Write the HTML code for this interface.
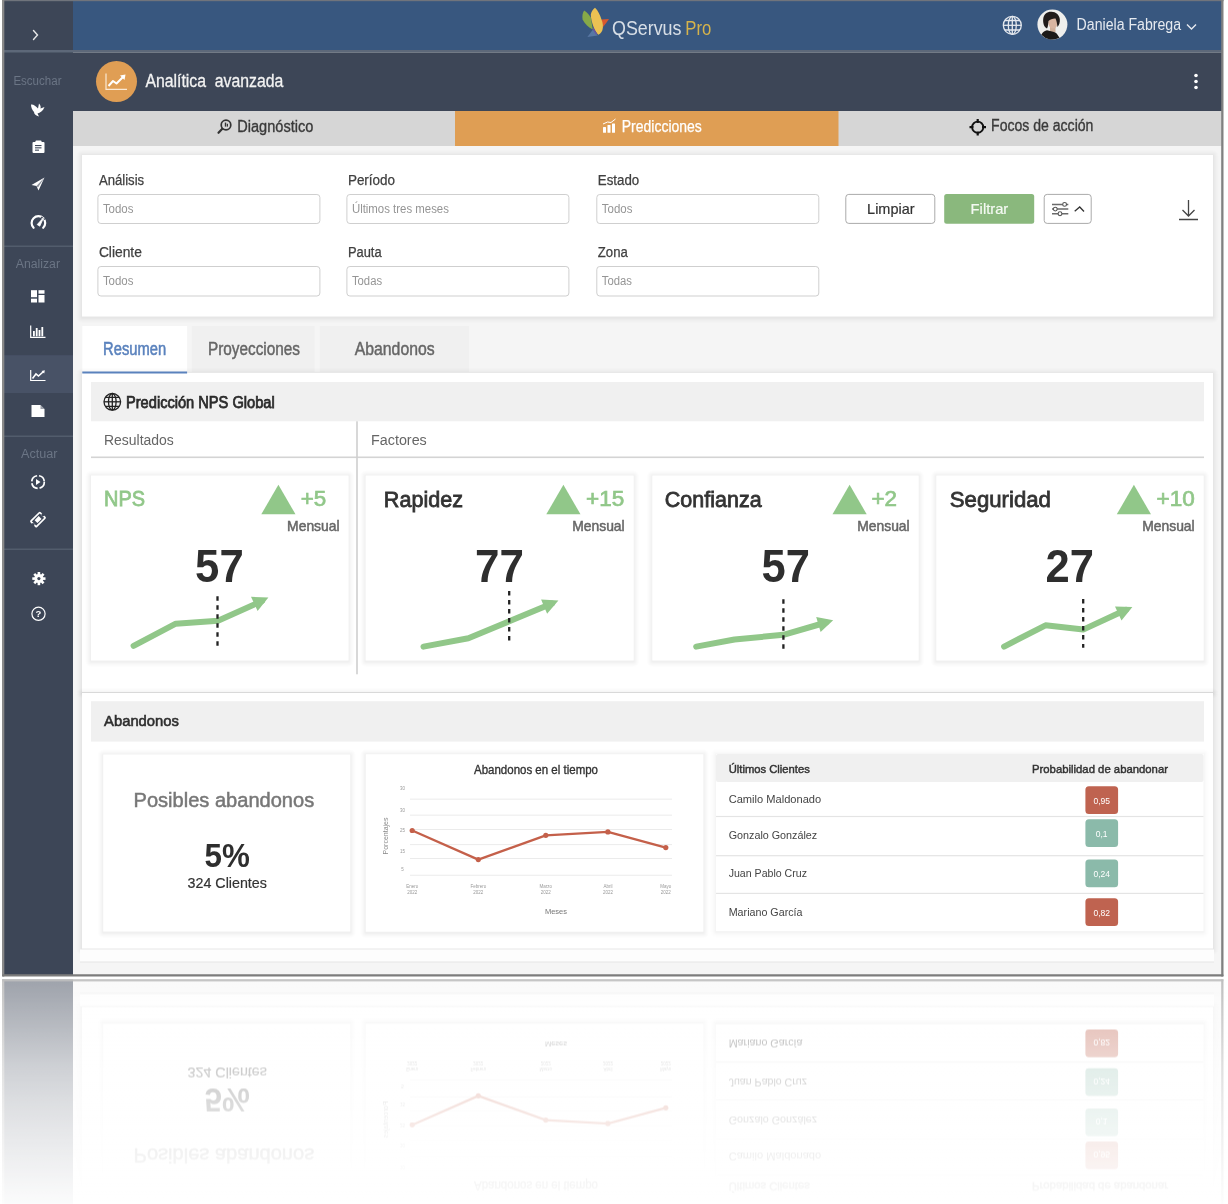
<!DOCTYPE html>
<html><head><meta charset="utf-8"><style>
html,body{margin:0;padding:0;background:#fff;}
body{width:1228px;height:1204px;position:relative;overflow:hidden;}
svg{position:absolute;left:0;top:0;will-change:transform;}
svg text{font-family:"Liberation Sans", sans-serif;}
#fade{position:absolute;left:0;top:978px;width:1228px;height:226px;background:linear-gradient(to bottom, rgba(255,255,255,0.5) 0px, rgba(255,255,255,0.53) 12px, rgba(255,255,255,0.645) 52px, rgba(255,255,255,0.745) 87px, rgba(255,255,255,0.82) 122px, rgba(255,255,255,0.88) 157px, rgba(255,255,255,0.96) 212px, rgba(255,255,255,0.98) 226px);}
</style></head><body>
<svg width="1228" height="1204" viewBox="0 0 1228 1204">
<g>
<rect x="2" y="0" width="1221" height="976" fill="#f5f5f5"/>
<rect x="2" y="0" width="71" height="976" fill="#3d4657"/>
<rect x="73" y="0" width="1150" height="51" fill="#38577f"/>
<rect x="2" y="50" width="1221" height="2.5" fill="#5d6879"/>
<rect x="73" y="52.5" width="1150" height="58.5" fill="#3d4657"/>
<path d="M33.5 30.5 L37.5 35 L33.5 39.5" fill="none" stroke="#e8e8e8" stroke-width="1.4" stroke-linecap="round"/>
<path d="M587.4 37 L592.9 29.5 L597.8 35.5 Z" fill="#5877a3"/>
<path d="M584.2 10.5 C587 12.5 589.5 15 590.8 17.5 L592.8 29.6 C588.5 27.5 585 24 582.6 19.5 C582 16 582.6 12.5 584.2 10.5 Z" fill="#86a948"/>
<path d="M601.2 19.5 L609 19 C607 22 605 24.5 603 27 Z" fill="#d7582e"/>
<path d="M595 7.8 C598 10.5 600 15 601.5 19.5 C603 23 603.5 27 602.3 30.5 C601 33 599.5 34.5 598.2 34.8 C596 32 594.5 29.5 593.6 27 C592 22.5 590.8 18 590.8 14.5 C591.5 11.5 593 9 595 7.8 Z" fill="#ebc153"/>
<path d="M593.6 27.2 C594.5 29.5 595.8 31.8 597.2 34 L596 34.8 L592.8 29.6 Z" fill="#6a55a0"/>
<text x="612" y="35.2" font-size="20" fill="#e9edf2" textLength="69.5" lengthAdjust="spacingAndGlyphs" fill-opacity="0.9">QServus</text>
<text x="685.3" y="35.2" font-size="20" fill="#d6b34b" textLength="26" lengthAdjust="spacingAndGlyphs">Pro</text>
<g fill="none" stroke="#e4e8ee" stroke-width="1.3"><circle cx="1012.3" cy="25.3" r="9"/><ellipse cx="1012.3" cy="25.3" rx="4" ry="9"/><line x1="1012.3" y1="16.3" x2="1012.3" y2="34.3"/><line x1="1003.3" y1="25.3" x2="1021.3" y2="25.3"/><path d="M1004.5 20.5 H1020 M1004.5 30 H1020"/></g>
<circle cx="1052.4" cy="24.6" r="15" fill="#efefed"/>
<rect x="1050" y="26" width="5.5" height="6" fill="#cfae98"/>
<ellipse cx="1053" cy="22.3" rx="4.8" ry="6.3" fill="#d9b5a1"/>
<path d="M1047 28.5 C1044 27 1042.8 23 1043.2 19 C1043.8 14 1047.5 11.5 1051.5 11.8 C1056 12 1059 14.5 1059.8 19 C1060.2 22.5 1059 25.5 1057.5 27 C1057 24 1056.8 21 1055.5 18.5 C1053 18.3 1050 19.5 1048.5 21 C1048 24 1048.2 26.5 1047 28.5 Z" fill="#211c1b"/>
<path d="M1041.3 34.7 C1043 32 1045 30.5 1047 30.3 L1051 31.3 C1054 31.8 1056 32.5 1057 34 L1059.5 37.8 A15 15 0 0 1 1041.3 34.7 Z" fill="#1b1918"/>
<text x="1076.6" y="30.4" font-size="16" fill="#e6eaf0" textLength="104.4" lengthAdjust="spacingAndGlyphs">Daniela Fabrega</text>
<path d="M1187 24.5 L1191.5 29 L1196 24.5" fill="none" stroke="#e6eaf0" stroke-width="1.4"/>
<circle cx="116.5" cy="81.5" r="20.5" fill="#e09e54"/>
<path d="M106 73.5 V89.3 H127" fill="none" stroke="#fbe9d4" stroke-width="1.2"/>
<path d="M108.5 86 L113 81 L116.5 83.5 L123.5 76.5" fill="none" stroke="#fff" stroke-width="2" stroke-linejoin="round"/>
<path d="M120 75.5 L125.5 74.5 L124.5 80 Z" fill="#fff"/>
<text x="145.4" y="87.3" font-size="18" fill="#f2f2f2" textLength="138" lengthAdjust="spacingAndGlyphs" stroke="#f2f2f2" stroke-width="0.3">Analítica  avanzada</text>
<circle cx="1196" cy="75.5" r="1.8" fill="#fff"/>
<circle cx="1196" cy="81.5" r="1.8" fill="#fff"/>
<circle cx="1196" cy="87.5" r="1.8" fill="#fff"/>
<rect x="73" y="111" width="1150" height="35" fill="#d6d6d6"/>
<rect x="455" y="111" width="383.5" height="35" fill="#df9e54"/>
<g fill="none" stroke="#333" stroke-width="1.7"><circle cx="226" cy="125" r="4.8"/><line x1="222.3" y1="128.8" x2="218.5" y2="132.8" stroke-width="2.2" stroke-linecap="round"/></g>
<rect x="224.8" y="122.6" width="1.4" height="4" fill="#333"/>
<rect x="226.8" y="123.8" width="1.2" height="2.8" fill="#333"/>
<text x="237.3" y="131.7" font-size="16" fill="#3a3a3a" textLength="76" lengthAdjust="spacingAndGlyphs" stroke="#3a3a3a" stroke-width="0.35">Diagnóstico</text>
<rect x="603" y="127" width="3" height="5.8" fill="#fff" rx="0.5"/>
<rect x="607.5" y="125" width="3" height="7.8" fill="#fff" rx="0.5"/>
<rect x="612" y="123.5" width="3" height="9.3" fill="#fff" rx="0.5"/>
<path d="M603 124 L607.5 122 L611 122.5 L615.5 119" fill="none" stroke="#fff" stroke-width="1"/>
<text x="621.8" y="131.7" font-size="16" fill="#fff" textLength="80" lengthAdjust="spacingAndGlyphs" stroke="#fff" stroke-width="0.25">Predicciones</text>
<g fill="none" stroke="#111" stroke-width="1.8"><circle cx="977.7" cy="127.2" r="5.6"/></g>
<path d="M977.7 119 V123 M977.7 131.5 V135.5 M969.5 127.2 H973.5 M982 127.2 H986" fill="none" stroke="#111" stroke-width="2.2"/>
<text x="991.1" y="131.4" font-size="16" fill="#3a3a3a" textLength="102.3" lengthAdjust="spacingAndGlyphs" stroke="#3a3a3a" stroke-width="0.35">Focos de acción</text>
<text x="13.4" y="85.2" font-size="12" fill="#6b7585" textLength="48.1" lengthAdjust="spacingAndGlyphs">Escuchar</text>
<path d="M31 104.5 C33 104 36 106 38 108.5 L39 103.5 C40.5 105 41 107 40.5 108.5 L44.5 107 C43 111 40 113 37.5 113.5 L39 116.5 C36 116 34 114 34 112 C32 110 31 107 31 104.5 Z" fill="#fff"/>
<rect x="32.5" y="142" width="12" height="11" fill="#fff" rx="1"/>
<rect x="35.5" y="140.5" width="6" height="2.8" fill="#fff" rx="0.8"/>
<rect x="35" y="145" width="6.5" height="1.1" fill="#3d4657"/>
<rect x="35" y="147.3" width="6.5" height="1.1" fill="#3d4657"/>
<rect x="35" y="149.6" width="4" height="1.1" fill="#3d4657"/>
<path d="M44.5 177.5 L31.5 185 L36.5 186 L38.5 190.5 Z" fill="#fff"/>
<path d="M36.5 186 L44.5 177.5 L38 187.5 Z" fill="#3d4657" fill-opacity="0.6"/>
<path d="M33.6 227.8 A6.8 6.8 0 1 1 43.2 227.8" fill="none" stroke="#fff" stroke-width="2.2" stroke-linecap="round"/>
<path d="M41 217 L45 219.6" fill="none" stroke="#3d4657" stroke-width="1.2"/>
<path d="M37.2 224.6 L43.6 217.6 L39.8 226.2 Z" fill="#fff" stroke="#fff" stroke-width="0.8" stroke-linejoin="round"/>
<rect x="4" y="245.5" width="69" height="1.5" fill="#525c6c"/>
<text x="15.8" y="268.4" font-size="12" fill="#6b7585" textLength="44.2" lengthAdjust="spacingAndGlyphs">Analizar</text>
<rect x="31" y="290.2" width="6" height="7" fill="#fff"/>
<rect x="38.5" y="290.2" width="6" height="3.5" fill="#fff"/>
<rect x="31" y="298.7" width="6" height="3.8" fill="#fff"/>
<rect x="38.5" y="295" width="6" height="7.5" fill="#fff"/>
<path d="M30.7 325.5 V337.3 H45.5" fill="none" stroke="#fff" stroke-width="1.2"/>
<rect x="33" y="331" width="1.8" height="5.3" fill="#fff"/>
<rect x="35.8" y="328" width="1.8" height="8.3" fill="#fff"/>
<rect x="38.6" y="330" width="1.8" height="6.3" fill="#fff"/>
<rect x="41.4" y="327" width="1.8" height="9.3" fill="#fff"/>
<rect x="4" y="355.2" width="69" height="37.8" fill="#485266"/>
<path d="M30.7 370 V380.5 H45.5" fill="none" stroke="#fff" stroke-width="1.2"/>
<path d="M32.5 378.5 L36 374 L38.5 376 L43.5 371.5" fill="none" stroke="#fff" stroke-width="1.6"/>
<path d="M41.5 371 L44.8 370.3 L44.2 373.5 Z" fill="#fff"/>
<path d="M31.5 405 H40.5 L44.5 409 V417 H31.5 Z" fill="#fff"/>
<path d="M40.5 405 V409 H44.5" fill="#3d4657" fill-opacity="0.5"/>
<rect x="4" y="435.5" width="69" height="1.5" fill="#525c6c"/>
<text x="21" y="458" font-size="12" fill="#6b7585" textLength="36.5" lengthAdjust="spacingAndGlyphs">Actuar</text>
<circle cx="38" cy="482" r="6.3" fill="none" stroke="#fff" stroke-width="1.7" stroke-dasharray="8 2"/>
<path d="M36 479 L40.5 482 L36 485 Z" fill="#fff"/>
<g transform="rotate(-45 38 519.6)">
<rect x="31.6" y="515.7" width="12.8" height="7.8" fill="none" rx="0.6" stroke="#fff" stroke-width="1.7"/>
<rect x="35.2" y="517.6" width="5.8" height="4" fill="#fff"/>
<circle cx="30.9" cy="519.6" r="1.6" fill="#3d4657"/><circle cx="45.1" cy="519.6" r="1.6" fill="#3d4657"/>
</g>
<rect x="4" y="548.5" width="69" height="1.5" fill="#525c6c"/>
<g fill="#fff"><circle cx="38.9" cy="578.6" r="4.6"/>
<rect x="37.6" y="572" width="2.6" height="3" transform="rotate(0 38.9 578.6)"/>
<rect x="37.6" y="572" width="2.6" height="3" transform="rotate(45 38.9 578.6)"/>
<rect x="37.6" y="572" width="2.6" height="3" transform="rotate(90 38.9 578.6)"/>
<rect x="37.6" y="572" width="2.6" height="3" transform="rotate(135 38.9 578.6)"/>
<rect x="37.6" y="572" width="2.6" height="3" transform="rotate(180 38.9 578.6)"/>
<rect x="37.6" y="572" width="2.6" height="3" transform="rotate(225 38.9 578.6)"/>
<rect x="37.6" y="572" width="2.6" height="3" transform="rotate(270 38.9 578.6)"/>
<rect x="37.6" y="572" width="2.6" height="3" transform="rotate(315 38.9 578.6)"/>
</g><circle cx="38.9" cy="578.6" r="1.6" fill="#3d4657"/>
<circle cx="38.5" cy="613.8" r="6.6" fill="none" stroke="#fff" stroke-width="1.2"/>
<text x="38.5" y="617.3" font-size="9.5" fill="#fff" font-weight="bold" text-anchor="middle">?</text>
<rect x="76" y="149.5" width="1143" height="174.0" fill="#000" rx="6" fill-opacity="0.005"/><rect x="77" y="150.5" width="1141" height="172.0" fill="#000" rx="5" fill-opacity="0.007"/><rect x="78" y="151.5" width="1139" height="170.0" fill="#000" rx="4" fill-opacity="0.009"/><rect x="79" y="152.5" width="1137" height="168.0" fill="#000" rx="3" fill-opacity="0.011"/><rect x="80" y="153.5" width="1135" height="166.0" fill="#000" rx="2" fill-opacity="0.013"/><rect x="81" y="154.5" width="1133" height="164.0" fill="#000" rx="1" fill-opacity="0.016"/><rect x="82" y="155" width="1131" height="161.5" fill="#fff"/>
<text x="98.9" y="185.2" font-size="14" fill="#404040" textLength="45.3" lengthAdjust="spacingAndGlyphs" stroke="#404040" stroke-width="0.25">Análisis</text>
<rect x="97.9" y="194.5" width="222" height="29" fill="#fff" rx="3" stroke="#cfcfcf" stroke-width="1"/>
<text x="102.9" y="212.8" font-size="12" fill="#959595" textLength="30.6" lengthAdjust="spacingAndGlyphs">Todos</text>
<text x="98.9" y="257.1" font-size="14" fill="#404040" textLength="43" lengthAdjust="spacingAndGlyphs" stroke="#404040" stroke-width="0.25">Cliente</text>
<rect x="97.9" y="266.5" width="222" height="29.5" fill="#fff" rx="3" stroke="#cfcfcf" stroke-width="1"/>
<text x="102.9" y="284.5" font-size="12" fill="#959595" textLength="30.6" lengthAdjust="spacingAndGlyphs">Todos</text>
<text x="347.9" y="185.2" font-size="14" fill="#404040" textLength="47.2" lengthAdjust="spacingAndGlyphs" stroke="#404040" stroke-width="0.25">Período</text>
<rect x="346.9" y="194.5" width="222" height="29" fill="#fff" rx="3" stroke="#cfcfcf" stroke-width="1"/>
<text x="351.9" y="212.8" font-size="12" fill="#959595" textLength="97" lengthAdjust="spacingAndGlyphs">Últimos tres meses</text>
<text x="347.9" y="257.1" font-size="14" fill="#404040" textLength="33.7" lengthAdjust="spacingAndGlyphs" stroke="#404040" stroke-width="0.25">Pauta</text>
<rect x="346.9" y="266.5" width="222" height="29.5" fill="#fff" rx="3" stroke="#cfcfcf" stroke-width="1"/>
<text x="351.9" y="284.5" font-size="12" fill="#959595" textLength="30.2" lengthAdjust="spacingAndGlyphs">Todas</text>
<text x="597.8" y="185.2" font-size="14" fill="#404040" textLength="41.4" lengthAdjust="spacingAndGlyphs" stroke="#404040" stroke-width="0.25">Estado</text>
<rect x="596.8" y="194.5" width="222" height="29" fill="#fff" rx="3" stroke="#cfcfcf" stroke-width="1"/>
<text x="601.8" y="212.8" font-size="12" fill="#959595" textLength="30.6" lengthAdjust="spacingAndGlyphs">Todos</text>
<text x="597.8" y="257.1" font-size="14" fill="#404040" textLength="30" lengthAdjust="spacingAndGlyphs" stroke="#404040" stroke-width="0.25">Zona</text>
<rect x="596.8" y="266.5" width="222" height="29.5" fill="#fff" rx="3" stroke="#cfcfcf" stroke-width="1"/>
<text x="601.8" y="284.5" font-size="12" fill="#959595" textLength="30.2" lengthAdjust="spacingAndGlyphs">Todas</text>
<rect x="845.8" y="194.4" width="89" height="29" fill="#fff" rx="3" stroke="#aaaaaa" stroke-width="1"/>
<text x="867.1" y="214" font-size="14.5" fill="#333" textLength="47.4" lengthAdjust="spacingAndGlyphs" stroke="#333" stroke-width="0.2">Limpiar</text>
<rect x="944.2" y="193.9" width="90" height="29.8" fill="#8ab87d" rx="2.5"/>
<text x="970.6" y="214" font-size="14.5" fill="#f4f9f2" textLength="37.7" lengthAdjust="spacingAndGlyphs" stroke="#f4f9f2" stroke-width="0.2">Filtrar</text>
<rect x="1044.2" y="194.4" width="47" height="29" fill="#fff" rx="3" stroke="#aaaaaa" stroke-width="1"/>
<path d="M1052 204.4 H1068.3 M1052 209.1 H1068.3 M1052 213.7 H1068.3" fill="none" stroke="#6a6a6a" stroke-width="1.5"/>
<g fill="#fff" stroke="#555" stroke-width="1.1"><circle cx="1064.6" cy="204.4" r="1.9"/><circle cx="1055.3" cy="209.1" r="1.9"/><circle cx="1060" cy="213.7" r="1.9"/></g>
<path d="M1074.7 211.2 L1079.7 207 L1084 211.5" fill="none" stroke="#333" stroke-width="1.3"/>
<path d="M1188.5 200 V216 M1182.5 210 L1188.5 216 L1194.5 210 M1179 219.5 H1198" fill="none" stroke="#444" stroke-width="1.3"/>
<rect x="82.3" y="326" width="104.8" height="47" fill="#ffffff"/>
<rect x="191.8" y="326" width="122.7" height="46" fill="#f0f0f0"/>
<rect x="319.7" y="326" width="149.3" height="46" fill="#f0f0f0"/>
<text x="103.1" y="355.2" font-size="17.5" fill="#5a82bd" textLength="63" lengthAdjust="spacingAndGlyphs" stroke="#5a82bd" stroke-width="0.55">Resumen</text>
<text x="208" y="355.2" font-size="17.5" fill="#666" textLength="92" lengthAdjust="spacingAndGlyphs" stroke="#666" stroke-width="0.45">Proyecciones</text>
<text x="354.8" y="355.2" font-size="17.5" fill="#666" textLength="79.8" lengthAdjust="spacingAndGlyphs" stroke="#666" stroke-width="0.45">Abandonos</text>
<rect x="76" y="367.5" width="1143" height="331.5" fill="#000" rx="6" fill-opacity="0.005"/><rect x="77" y="368.5" width="1141" height="329.5" fill="#000" rx="5" fill-opacity="0.007"/><rect x="78" y="369.5" width="1139" height="327.5" fill="#000" rx="4" fill-opacity="0.009"/><rect x="79" y="370.5" width="1137" height="325.5" fill="#000" rx="3" fill-opacity="0.011"/><rect x="80" y="371.5" width="1135" height="323.5" fill="#000" rx="2" fill-opacity="0.013"/><rect x="81" y="372.5" width="1133" height="321.5" fill="#000" rx="1" fill-opacity="0.016"/><rect x="82" y="373" width="1131" height="319" fill="#fff"/>
<rect x="82.3" y="371.5" width="104.8" height="2" fill="#5a82bd"/>
<rect x="91" y="382" width="1113" height="39.3" fill="#f0f0f0"/>
<g fill="none" stroke="#222" stroke-width="1.3"><circle cx="112.3" cy="401.8" r="8.3"/><ellipse cx="112.3" cy="401.8" rx="3.8" ry="8.3"/><line x1="112.3" y1="393.5" x2="112.3" y2="410.1"/><line x1="104" y1="401.8" x2="120.6" y2="401.8"/><path d="M105.2 397.3 H119.4 M105.2 406.3 H119.4"/></g>
<text x="126" y="407.5" font-size="16" fill="#2b2b2b" textLength="148.7" lengthAdjust="spacingAndGlyphs" stroke="#2b2b2b" stroke-width="0.75">Predicción NPS Global</text>
<text x="104" y="445.2" font-size="15.5" fill="#666" textLength="69.8" lengthAdjust="spacingAndGlyphs">Resultados</text>
<text x="371" y="445.2" font-size="15.5" fill="#666" textLength="55.8" lengthAdjust="spacingAndGlyphs">Factores</text>
<rect x="91" y="456.5" width="1113" height="1.6" fill="#d4d4d4"/>
<rect x="356.2" y="421.3" width="1.6" height="253" fill="#cfcfcf"/>
<rect x="85" y="470.0" width="269.6" height="197.5" fill="#000" rx="6" fill-opacity="0.005"/><rect x="86" y="471.0" width="267.6" height="195.5" fill="#000" rx="5" fill-opacity="0.007"/><rect x="87" y="472.0" width="265.6" height="193.5" fill="#000" rx="4" fill-opacity="0.009"/><rect x="88" y="473.0" width="263.6" height="191.5" fill="#000" rx="3" fill-opacity="0.011"/><rect x="89" y="474.0" width="261.6" height="189.5" fill="#000" rx="2" fill-opacity="0.013"/><rect x="90" y="475.0" width="259.6" height="187.5" fill="#000" rx="1" fill-opacity="0.016"/><rect x="91" y="475.5" width="257.6" height="185" fill="#fff"/>
<text x="104" y="506.3" font-size="22.5" fill="#91c789" textLength="41" lengthAdjust="spacingAndGlyphs" stroke="#91c789" stroke-width="0.8">NPS</text>
<path d="M261.3 514.3 L278.40000000000003 484.8 L295.5 514.3 Z" fill="#91c789"/>
<text x="300.7" y="506.3" font-size="22" fill="#91c789" textLength="25.5" lengthAdjust="spacingAndGlyphs" stroke="#91c789" stroke-width="0.7">+5</text>
<text x="339.6" y="530.6" font-size="14.5" fill="#666" text-anchor="end" textLength="52.5" lengthAdjust="spacingAndGlyphs" stroke="#666" stroke-width="0.5">Mensual</text>
<text x="195.1" y="582.2" font-size="47" fill="#2e2e2e" font-weight="bold" textLength="48.599999999999994" lengthAdjust="spacingAndGlyphs">57</text>
<path d="M133.6 645.8 L175.8 623.7 L218 620.7 L262 601" fill="none" stroke="#91c789" stroke-width="6" stroke-linecap="round" stroke-linejoin="round"/>
<path d="M268.4 597.4 L257.6 611.0 L251.0 596.8 Z" fill="#91c789"/>
<line x1="217.5" y1="596.3" x2="217.5" y2="645.8" stroke="#222" stroke-width="2.3" stroke-dasharray="4.5 4.5"/>
<rect x="359.6" y="470.0" width="280.1" height="197.5" fill="#000" rx="6" fill-opacity="0.005"/><rect x="360.6" y="471.0" width="278.1" height="195.5" fill="#000" rx="5" fill-opacity="0.007"/><rect x="361.6" y="472.0" width="276.1" height="193.5" fill="#000" rx="4" fill-opacity="0.009"/><rect x="362.6" y="473.0" width="274.1" height="191.5" fill="#000" rx="3" fill-opacity="0.011"/><rect x="363.6" y="474.0" width="272.1" height="189.5" fill="#000" rx="2" fill-opacity="0.013"/><rect x="364.6" y="475.0" width="270.1" height="187.5" fill="#000" rx="1" fill-opacity="0.016"/><rect x="365.6" y="475.5" width="268.1" height="185" fill="#fff"/>
<text x="383.8" y="506.5" font-size="22.5" fill="#333" textLength="79.19999999999999" lengthAdjust="spacingAndGlyphs" stroke="#333" stroke-width="0.8">Rapidez</text>
<path d="M546.3 514.3 L563.4 484.8 L580.5 514.3 Z" fill="#91c789"/>
<text x="586" y="506.3" font-size="22" fill="#91c789" textLength="38.200000000000045" lengthAdjust="spacingAndGlyphs" stroke="#91c789" stroke-width="0.7">+15</text>
<text x="624.7" y="530.6" font-size="14.5" fill="#666" text-anchor="end" textLength="52.5" lengthAdjust="spacingAndGlyphs" stroke="#666" stroke-width="0.5">Mensual</text>
<text x="475" y="582.2" font-size="47" fill="#2e2e2e" font-weight="bold" textLength="48.89999999999998" lengthAdjust="spacingAndGlyphs">77</text>
<path d="M423.5 646.6 L468.4 638.3 L552 603.5" fill="none" stroke="#91c789" stroke-width="6" stroke-linecap="round" stroke-linejoin="round"/>
<path d="M558.4 600.6 L547.1 613.8 L541.1 599.4 Z" fill="#91c789"/>
<line x1="509.2" y1="591" x2="509.2" y2="640.7" stroke="#222" stroke-width="2.3" stroke-dasharray="4.5 4.5"/>
<rect x="646.3" y="470.0" width="278.4" height="197.5" fill="#000" rx="6" fill-opacity="0.005"/><rect x="647.3" y="471.0" width="276.4" height="195.5" fill="#000" rx="5" fill-opacity="0.007"/><rect x="648.3" y="472.0" width="274.4" height="193.5" fill="#000" rx="4" fill-opacity="0.009"/><rect x="649.3" y="473.0" width="272.4" height="191.5" fill="#000" rx="3" fill-opacity="0.011"/><rect x="650.3" y="474.0" width="270.4" height="189.5" fill="#000" rx="2" fill-opacity="0.013"/><rect x="651.3" y="475.0" width="268.4" height="187.5" fill="#000" rx="1" fill-opacity="0.016"/><rect x="652.3" y="475.5" width="266.4" height="185" fill="#fff"/>
<text x="664.8" y="506.5" font-size="22.5" fill="#333" textLength="96.80000000000007" lengthAdjust="spacingAndGlyphs" stroke="#333" stroke-width="0.8">Confianza</text>
<path d="M832.5 514.3 L849.6 484.8 L866.7 514.3 Z" fill="#91c789"/>
<text x="871.5" y="506.3" font-size="22" fill="#91c789" textLength="25.5" lengthAdjust="spacingAndGlyphs" stroke="#91c789" stroke-width="0.7">+2</text>
<text x="909.6999999999999" y="530.6" font-size="14.5" fill="#666" text-anchor="end" textLength="52.5" lengthAdjust="spacingAndGlyphs" stroke="#666" stroke-width="0.5">Mensual</text>
<text x="761.6" y="582.2" font-size="47" fill="#2e2e2e" font-weight="bold" textLength="48.39999999999998" lengthAdjust="spacingAndGlyphs">57</text>
<path d="M696.2 646.6 L734.5 639.5 L783.4 634.8 L826 622.5" fill="none" stroke="#91c789" stroke-width="6" stroke-linecap="round" stroke-linejoin="round"/>
<path d="M833.2 620.2 L820.6 632.0 L816.2 617.1 Z" fill="#91c789"/>
<line x1="783.4" y1="599.3" x2="783.4" y2="649" stroke="#222" stroke-width="2.3" stroke-dasharray="4.5 4.5"/>
<rect x="930.3" y="470.0" width="279.4" height="197.5" fill="#000" rx="6" fill-opacity="0.005"/><rect x="931.3" y="471.0" width="277.4" height="195.5" fill="#000" rx="5" fill-opacity="0.007"/><rect x="932.3" y="472.0" width="275.4" height="193.5" fill="#000" rx="4" fill-opacity="0.009"/><rect x="933.3" y="473.0" width="273.4" height="191.5" fill="#000" rx="3" fill-opacity="0.011"/><rect x="934.3" y="474.0" width="271.4" height="189.5" fill="#000" rx="2" fill-opacity="0.013"/><rect x="935.3" y="475.0" width="269.4" height="187.5" fill="#000" rx="1" fill-opacity="0.016"/><rect x="936.3" y="475.5" width="267.4" height="185" fill="#fff"/>
<text x="949.8" y="506.5" font-size="22.5" fill="#333" textLength="101.10000000000014" lengthAdjust="spacingAndGlyphs" stroke="#333" stroke-width="0.8">Seguridad</text>
<path d="M1116.8 514.3 L1133.8999999999999 484.8 L1151.0 514.3 Z" fill="#91c789"/>
<text x="1156.5" y="506.3" font-size="22" fill="#91c789" textLength="38.200000000000045" lengthAdjust="spacingAndGlyphs" stroke="#91c789" stroke-width="0.7">+10</text>
<text x="1194.6999999999998" y="530.6" font-size="14.5" fill="#666" text-anchor="end" textLength="52.5" lengthAdjust="spacingAndGlyphs" stroke="#666" stroke-width="0.5">Mensual</text>
<text x="1045.5" y="582.2" font-size="47" fill="#2e2e2e" font-weight="bold" textLength="48.40000000000009" lengthAdjust="spacingAndGlyphs">27</text>
<path d="M1004.1 646.6 L1045.5 625.3 L1083.2 629.6 L1126 609.8" fill="none" stroke="#91c789" stroke-width="6" stroke-linecap="round" stroke-linejoin="round"/>
<path d="M1132.4 607.0 L1121.5 620.5 L1115.0 606.4 Z" fill="#91c789"/>
<line x1="1083.2" y1="598.9" x2="1083.2" y2="647.8" stroke="#222" stroke-width="2.3" stroke-dasharray="4.5 4.5"/>
<rect x="76" y="687.5" width="1143" height="268.0" fill="#000" rx="6" fill-opacity="0.005"/><rect x="77" y="688.5" width="1141" height="266.0" fill="#000" rx="5" fill-opacity="0.007"/><rect x="78" y="689.5" width="1139" height="264.0" fill="#000" rx="4" fill-opacity="0.009"/><rect x="79" y="690.5" width="1137" height="262.0" fill="#000" rx="3" fill-opacity="0.011"/><rect x="80" y="691.5" width="1135" height="260.0" fill="#000" rx="2" fill-opacity="0.013"/><rect x="81" y="692.5" width="1133" height="258.0" fill="#000" rx="1" fill-opacity="0.016"/><rect x="82" y="693" width="1131" height="255.5" fill="#fff"/>
<rect x="91" y="701.2" width="1113" height="40.4" fill="#f0f0f0"/>
<text x="104.1" y="726" font-size="15.5" fill="#2e2e2e" textLength="74.8" lengthAdjust="spacingAndGlyphs" stroke="#2e2e2e" stroke-width="0.6">Abandonos</text>
<rect x="97.2" y="749.0" width="259.1" height="189.5" fill="#000" rx="6" fill-opacity="0.005"/><rect x="98.2" y="750.0" width="257.1" height="187.5" fill="#000" rx="5" fill-opacity="0.007"/><rect x="99.2" y="751.0" width="255.1" height="185.5" fill="#000" rx="4" fill-opacity="0.009"/><rect x="100.2" y="752.0" width="253.1" height="183.5" fill="#000" rx="3" fill-opacity="0.011"/><rect x="101.2" y="753.0" width="251.1" height="181.5" fill="#000" rx="2" fill-opacity="0.013"/><rect x="102.2" y="754.0" width="249.1" height="179.5" fill="#000" rx="1" fill-opacity="0.016"/><rect x="103.2" y="754.5" width="247.1" height="177" fill="#fff"/>
<text x="133.5" y="806.5" font-size="20.5" fill="#777" textLength="180.7" lengthAdjust="spacingAndGlyphs" stroke="#777" stroke-width="0.5">Posibles abandonos</text>
<text x="204.6" y="867.3" font-size="33" fill="#2e2e2e" font-weight="bold" textLength="45.3" lengthAdjust="spacingAndGlyphs">5%</text>
<text x="187.6" y="888" font-size="15.5" fill="#333" textLength="79.3" lengthAdjust="spacingAndGlyphs" stroke="#333" stroke-width="0.2">324 Clientes</text>
<rect x="359.7" y="748.7" width="349.7" height="190.0" fill="#000" rx="6" fill-opacity="0.005"/><rect x="360.7" y="749.7" width="347.7" height="188.0" fill="#000" rx="5" fill-opacity="0.007"/><rect x="361.7" y="750.7" width="345.7" height="186.0" fill="#000" rx="4" fill-opacity="0.009"/><rect x="362.7" y="751.7" width="343.7" height="184.0" fill="#000" rx="3" fill-opacity="0.011"/><rect x="363.7" y="752.7" width="341.7" height="182.0" fill="#000" rx="2" fill-opacity="0.013"/><rect x="364.7" y="753.7" width="339.7" height="180.0" fill="#000" rx="1" fill-opacity="0.016"/><rect x="365.7" y="754.2" width="337.7" height="177.5" fill="#fff"/>
<text x="474" y="774" font-size="12.5" fill="#333" textLength="124" lengthAdjust="spacingAndGlyphs" stroke="#333" stroke-width="0.35">Abandonos en el tiempo</text>
<rect x="410" y="798.7" width="262" height="0.8" fill="#e6e6e6"/>
<rect x="410" y="814.7" width="262" height="0.8" fill="#e6e6e6"/>
<rect x="410" y="829.2" width="262" height="0.8" fill="#e6e6e6"/>
<rect x="410" y="844.3000000000001" width="262" height="0.8" fill="#e6e6e6"/>
<rect x="410" y="858.0" width="262" height="0.8" fill="#e6e6e6"/>
<rect x="410" y="874.8000000000001" width="262" height="0.8" fill="#e6e6e6"/>
<text x="402.5" y="790.0" font-size="4.5" fill="#999" text-anchor="middle">30</text>
<text x="402.5" y="812.0" font-size="4.5" fill="#999" text-anchor="middle">30</text>
<text x="402.5" y="831.5" font-size="4.5" fill="#999" text-anchor="middle">25</text>
<text x="402.5" y="852.5" font-size="4.5" fill="#999" text-anchor="middle">15</text>
<text x="402.5" y="871.0" font-size="4.5" fill="#999" text-anchor="middle">5</text>
<text x="385.5" y="836" font-size="7" fill="#888" text-anchor="middle" transform="rotate(-90 385.5 836)" dy="2">Porcentajes</text>
<path d="M412.2 830.5 L478.3 859.6 L545.8 835.3 L607.9 831.9 L665.8 847.6" fill="none" stroke="#c4604a" stroke-width="2.3" stroke-linejoin="round"/>
<circle cx="412.2" cy="830.5" r="2.6" fill="#c4604a"/>
<circle cx="478.3" cy="859.6" r="2.6" fill="#c4604a"/>
<circle cx="545.8" cy="835.3" r="2.6" fill="#c4604a"/>
<circle cx="607.9" cy="831.9" r="2.6" fill="#c4604a"/>
<circle cx="665.8" cy="847.6" r="2.6" fill="#c4604a"/>
<text x="412.2" y="887.5" font-size="4.5" fill="#999" text-anchor="middle">Enero</text>
<text x="412.2" y="893.8" font-size="4.5" fill="#999" text-anchor="middle">2022</text>
<text x="478.3" y="887.5" font-size="4.5" fill="#999" text-anchor="middle">Febrero</text>
<text x="478.3" y="893.8" font-size="4.5" fill="#999" text-anchor="middle">2022</text>
<text x="545.8" y="887.5" font-size="4.5" fill="#999" text-anchor="middle">Marzo</text>
<text x="545.8" y="893.8" font-size="4.5" fill="#999" text-anchor="middle">2022</text>
<text x="607.9" y="887.5" font-size="4.5" fill="#999" text-anchor="middle">Abril</text>
<text x="607.9" y="893.8" font-size="4.5" fill="#999" text-anchor="middle">2022</text>
<text x="665.8" y="887.5" font-size="4.5" fill="#999" text-anchor="middle">Mayo</text>
<text x="665.8" y="893.8" font-size="4.5" fill="#999" text-anchor="middle">2022</text>
<text x="556" y="914" font-size="7.5" fill="#777" text-anchor="middle">Meses</text>
<rect x="710" y="748.5" width="499.5" height="189.5" fill="#000" rx="6" fill-opacity="0.005"/><rect x="711" y="749.5" width="497.5" height="187.5" fill="#000" rx="5" fill-opacity="0.007"/><rect x="712" y="750.5" width="495.5" height="185.5" fill="#000" rx="4" fill-opacity="0.009"/><rect x="713" y="751.5" width="493.5" height="183.5" fill="#000" rx="3" fill-opacity="0.011"/><rect x="714" y="752.5" width="491.5" height="181.5" fill="#000" rx="2" fill-opacity="0.013"/><rect x="715" y="753.5" width="489.5" height="179.5" fill="#000" rx="1" fill-opacity="0.016"/><rect x="716" y="754" width="487.5" height="177" fill="#fff"/>
<rect x="716" y="754" width="487.5" height="28" fill="#f0f0f0" rx="2"/>
<text x="728.7" y="772.5" font-size="11.5" fill="#333" textLength="81.1" lengthAdjust="spacingAndGlyphs" stroke="#333" stroke-width="0.45">Últimos Clientes</text>
<text x="1032" y="772.5" font-size="11.5" fill="#333" textLength="136" lengthAdjust="spacingAndGlyphs" stroke="#333" stroke-width="0.45">Probabilidad de abandonar</text>
<text x="728.7" y="802.6" font-size="11.5" fill="#444" textLength="92.5" lengthAdjust="spacingAndGlyphs">Camilo Maldonado</text>
<rect x="1085.4" y="786.2" width="32.7" height="27.7" fill="#bf6350" rx="3.5"/>
<text x="1101.7" y="803.7" font-size="8.5" fill="#fff" text-anchor="middle">0,95</text>
<text x="728.7" y="839.2" font-size="11.5" fill="#444" textLength="88.5" lengthAdjust="spacingAndGlyphs">Gonzalo González</text>
<rect x="1085.4" y="819.3" width="32.7" height="27.7" fill="#8bbaaa" rx="3.5"/>
<text x="1101.7" y="836.8" font-size="8.5" fill="#fff" text-anchor="middle">0,1</text>
<text x="728.7" y="876.7" font-size="11.5" fill="#444" textLength="78.3" lengthAdjust="spacingAndGlyphs">Juan Pablo Cruz</text>
<rect x="1085.4" y="859.6" width="32.7" height="27.7" fill="#8bbaaa" rx="3.5"/>
<text x="1101.7" y="877.1" font-size="8.5" fill="#fff" text-anchor="middle">0,24</text>
<text x="728.7" y="916.1" font-size="11.5" fill="#444" textLength="73.8" lengthAdjust="spacingAndGlyphs">Mariano García</text>
<rect x="1085.4" y="898.2" width="32.7" height="27.7" fill="#bf6350" rx="3.5"/>
<text x="1101.7" y="915.7" font-size="8.5" fill="#fff" text-anchor="middle">0,82</text>
<rect x="716" y="815.9" width="487.5" height="1.2" fill="#e4e4e4"/>
<rect x="716" y="855.1" width="487.5" height="1.2" fill="#e4e4e4"/>
<rect x="716" y="892.8" width="487.5" height="1.2" fill="#e4e4e4"/>
<rect x="80" y="949.5" width="1134" height="12.5" fill="#fdfdfd"/>
<rect x="80" y="961.5" width="1134" height="1" fill="#e6e6e6"/>
<rect x="2" y="0" width="1221.5" height="1.2" fill="#70747c"/>
<rect x="2" y="0" width="2.3" height="976.5" fill="#8a8a8a"/>
<rect x="1221.2" y="0" width="2.3" height="976.5" fill="#808080"/>
<rect x="2" y="974.2" width="1221.5" height="2.3" fill="#7c7c7c" rx="1"/>
</g>
<g transform="translate(0 1955.5) scale(1 -1)">
<rect x="2" y="0" width="1221" height="976" fill="#f5f5f5"/>
<rect x="2" y="0" width="71" height="976" fill="#3d4657"/>
<rect x="73" y="0" width="1150" height="51" fill="#38577f"/>
<rect x="2" y="50" width="1221" height="2.5" fill="#5d6879"/>
<rect x="73" y="52.5" width="1150" height="58.5" fill="#3d4657"/>
<path d="M33.5 30.5 L37.5 35 L33.5 39.5" fill="none" stroke="#e8e8e8" stroke-width="1.4" stroke-linecap="round"/>
<path d="M587.4 37 L592.9 29.5 L597.8 35.5 Z" fill="#5877a3"/>
<path d="M584.2 10.5 C587 12.5 589.5 15 590.8 17.5 L592.8 29.6 C588.5 27.5 585 24 582.6 19.5 C582 16 582.6 12.5 584.2 10.5 Z" fill="#86a948"/>
<path d="M601.2 19.5 L609 19 C607 22 605 24.5 603 27 Z" fill="#d7582e"/>
<path d="M595 7.8 C598 10.5 600 15 601.5 19.5 C603 23 603.5 27 602.3 30.5 C601 33 599.5 34.5 598.2 34.8 C596 32 594.5 29.5 593.6 27 C592 22.5 590.8 18 590.8 14.5 C591.5 11.5 593 9 595 7.8 Z" fill="#ebc153"/>
<path d="M593.6 27.2 C594.5 29.5 595.8 31.8 597.2 34 L596 34.8 L592.8 29.6 Z" fill="#6a55a0"/>
<text x="612" y="35.2" font-size="20" fill="#e9edf2" textLength="69.5" lengthAdjust="spacingAndGlyphs" fill-opacity="0.9">QServus</text>
<text x="685.3" y="35.2" font-size="20" fill="#d6b34b" textLength="26" lengthAdjust="spacingAndGlyphs">Pro</text>
<g fill="none" stroke="#e4e8ee" stroke-width="1.3"><circle cx="1012.3" cy="25.3" r="9"/><ellipse cx="1012.3" cy="25.3" rx="4" ry="9"/><line x1="1012.3" y1="16.3" x2="1012.3" y2="34.3"/><line x1="1003.3" y1="25.3" x2="1021.3" y2="25.3"/><path d="M1004.5 20.5 H1020 M1004.5 30 H1020"/></g>
<circle cx="1052.4" cy="24.6" r="15" fill="#efefed"/>
<rect x="1050" y="26" width="5.5" height="6" fill="#cfae98"/>
<ellipse cx="1053" cy="22.3" rx="4.8" ry="6.3" fill="#d9b5a1"/>
<path d="M1047 28.5 C1044 27 1042.8 23 1043.2 19 C1043.8 14 1047.5 11.5 1051.5 11.8 C1056 12 1059 14.5 1059.8 19 C1060.2 22.5 1059 25.5 1057.5 27 C1057 24 1056.8 21 1055.5 18.5 C1053 18.3 1050 19.5 1048.5 21 C1048 24 1048.2 26.5 1047 28.5 Z" fill="#211c1b"/>
<path d="M1041.3 34.7 C1043 32 1045 30.5 1047 30.3 L1051 31.3 C1054 31.8 1056 32.5 1057 34 L1059.5 37.8 A15 15 0 0 1 1041.3 34.7 Z" fill="#1b1918"/>
<text x="1076.6" y="30.4" font-size="16" fill="#e6eaf0" textLength="104.4" lengthAdjust="spacingAndGlyphs">Daniela Fabrega</text>
<path d="M1187 24.5 L1191.5 29 L1196 24.5" fill="none" stroke="#e6eaf0" stroke-width="1.4"/>
<circle cx="116.5" cy="81.5" r="20.5" fill="#e09e54"/>
<path d="M106 73.5 V89.3 H127" fill="none" stroke="#fbe9d4" stroke-width="1.2"/>
<path d="M108.5 86 L113 81 L116.5 83.5 L123.5 76.5" fill="none" stroke="#fff" stroke-width="2" stroke-linejoin="round"/>
<path d="M120 75.5 L125.5 74.5 L124.5 80 Z" fill="#fff"/>
<text x="145.4" y="87.3" font-size="18" fill="#f2f2f2" textLength="138" lengthAdjust="spacingAndGlyphs" stroke="#f2f2f2" stroke-width="0.3">Analítica  avanzada</text>
<circle cx="1196" cy="75.5" r="1.8" fill="#fff"/>
<circle cx="1196" cy="81.5" r="1.8" fill="#fff"/>
<circle cx="1196" cy="87.5" r="1.8" fill="#fff"/>
<rect x="73" y="111" width="1150" height="35" fill="#d6d6d6"/>
<rect x="455" y="111" width="383.5" height="35" fill="#df9e54"/>
<g fill="none" stroke="#333" stroke-width="1.7"><circle cx="226" cy="125" r="4.8"/><line x1="222.3" y1="128.8" x2="218.5" y2="132.8" stroke-width="2.2" stroke-linecap="round"/></g>
<rect x="224.8" y="122.6" width="1.4" height="4" fill="#333"/>
<rect x="226.8" y="123.8" width="1.2" height="2.8" fill="#333"/>
<text x="237.3" y="131.7" font-size="16" fill="#3a3a3a" textLength="76" lengthAdjust="spacingAndGlyphs" stroke="#3a3a3a" stroke-width="0.35">Diagnóstico</text>
<rect x="603" y="127" width="3" height="5.8" fill="#fff" rx="0.5"/>
<rect x="607.5" y="125" width="3" height="7.8" fill="#fff" rx="0.5"/>
<rect x="612" y="123.5" width="3" height="9.3" fill="#fff" rx="0.5"/>
<path d="M603 124 L607.5 122 L611 122.5 L615.5 119" fill="none" stroke="#fff" stroke-width="1"/>
<text x="621.8" y="131.7" font-size="16" fill="#fff" textLength="80" lengthAdjust="spacingAndGlyphs" stroke="#fff" stroke-width="0.25">Predicciones</text>
<g fill="none" stroke="#111" stroke-width="1.8"><circle cx="977.7" cy="127.2" r="5.6"/></g>
<path d="M977.7 119 V123 M977.7 131.5 V135.5 M969.5 127.2 H973.5 M982 127.2 H986" fill="none" stroke="#111" stroke-width="2.2"/>
<text x="991.1" y="131.4" font-size="16" fill="#3a3a3a" textLength="102.3" lengthAdjust="spacingAndGlyphs" stroke="#3a3a3a" stroke-width="0.35">Focos de acción</text>
<text x="13.4" y="85.2" font-size="12" fill="#6b7585" textLength="48.1" lengthAdjust="spacingAndGlyphs">Escuchar</text>
<path d="M31 104.5 C33 104 36 106 38 108.5 L39 103.5 C40.5 105 41 107 40.5 108.5 L44.5 107 C43 111 40 113 37.5 113.5 L39 116.5 C36 116 34 114 34 112 C32 110 31 107 31 104.5 Z" fill="#fff"/>
<rect x="32.5" y="142" width="12" height="11" fill="#fff" rx="1"/>
<rect x="35.5" y="140.5" width="6" height="2.8" fill="#fff" rx="0.8"/>
<rect x="35" y="145" width="6.5" height="1.1" fill="#3d4657"/>
<rect x="35" y="147.3" width="6.5" height="1.1" fill="#3d4657"/>
<rect x="35" y="149.6" width="4" height="1.1" fill="#3d4657"/>
<path d="M44.5 177.5 L31.5 185 L36.5 186 L38.5 190.5 Z" fill="#fff"/>
<path d="M36.5 186 L44.5 177.5 L38 187.5 Z" fill="#3d4657" fill-opacity="0.6"/>
<path d="M33.6 227.8 A6.8 6.8 0 1 1 43.2 227.8" fill="none" stroke="#fff" stroke-width="2.2" stroke-linecap="round"/>
<path d="M41 217 L45 219.6" fill="none" stroke="#3d4657" stroke-width="1.2"/>
<path d="M37.2 224.6 L43.6 217.6 L39.8 226.2 Z" fill="#fff" stroke="#fff" stroke-width="0.8" stroke-linejoin="round"/>
<rect x="4" y="245.5" width="69" height="1.5" fill="#525c6c"/>
<text x="15.8" y="268.4" font-size="12" fill="#6b7585" textLength="44.2" lengthAdjust="spacingAndGlyphs">Analizar</text>
<rect x="31" y="290.2" width="6" height="7" fill="#fff"/>
<rect x="38.5" y="290.2" width="6" height="3.5" fill="#fff"/>
<rect x="31" y="298.7" width="6" height="3.8" fill="#fff"/>
<rect x="38.5" y="295" width="6" height="7.5" fill="#fff"/>
<path d="M30.7 325.5 V337.3 H45.5" fill="none" stroke="#fff" stroke-width="1.2"/>
<rect x="33" y="331" width="1.8" height="5.3" fill="#fff"/>
<rect x="35.8" y="328" width="1.8" height="8.3" fill="#fff"/>
<rect x="38.6" y="330" width="1.8" height="6.3" fill="#fff"/>
<rect x="41.4" y="327" width="1.8" height="9.3" fill="#fff"/>
<rect x="4" y="355.2" width="69" height="37.8" fill="#485266"/>
<path d="M30.7 370 V380.5 H45.5" fill="none" stroke="#fff" stroke-width="1.2"/>
<path d="M32.5 378.5 L36 374 L38.5 376 L43.5 371.5" fill="none" stroke="#fff" stroke-width="1.6"/>
<path d="M41.5 371 L44.8 370.3 L44.2 373.5 Z" fill="#fff"/>
<path d="M31.5 405 H40.5 L44.5 409 V417 H31.5 Z" fill="#fff"/>
<path d="M40.5 405 V409 H44.5" fill="#3d4657" fill-opacity="0.5"/>
<rect x="4" y="435.5" width="69" height="1.5" fill="#525c6c"/>
<text x="21" y="458" font-size="12" fill="#6b7585" textLength="36.5" lengthAdjust="spacingAndGlyphs">Actuar</text>
<circle cx="38" cy="482" r="6.3" fill="none" stroke="#fff" stroke-width="1.7" stroke-dasharray="8 2"/>
<path d="M36 479 L40.5 482 L36 485 Z" fill="#fff"/>
<g transform="rotate(-45 38 519.6)">
<rect x="31.6" y="515.7" width="12.8" height="7.8" fill="none" rx="0.6" stroke="#fff" stroke-width="1.7"/>
<rect x="35.2" y="517.6" width="5.8" height="4" fill="#fff"/>
<circle cx="30.9" cy="519.6" r="1.6" fill="#3d4657"/><circle cx="45.1" cy="519.6" r="1.6" fill="#3d4657"/>
</g>
<rect x="4" y="548.5" width="69" height="1.5" fill="#525c6c"/>
<g fill="#fff"><circle cx="38.9" cy="578.6" r="4.6"/>
<rect x="37.6" y="572" width="2.6" height="3" transform="rotate(0 38.9 578.6)"/>
<rect x="37.6" y="572" width="2.6" height="3" transform="rotate(45 38.9 578.6)"/>
<rect x="37.6" y="572" width="2.6" height="3" transform="rotate(90 38.9 578.6)"/>
<rect x="37.6" y="572" width="2.6" height="3" transform="rotate(135 38.9 578.6)"/>
<rect x="37.6" y="572" width="2.6" height="3" transform="rotate(180 38.9 578.6)"/>
<rect x="37.6" y="572" width="2.6" height="3" transform="rotate(225 38.9 578.6)"/>
<rect x="37.6" y="572" width="2.6" height="3" transform="rotate(270 38.9 578.6)"/>
<rect x="37.6" y="572" width="2.6" height="3" transform="rotate(315 38.9 578.6)"/>
</g><circle cx="38.9" cy="578.6" r="1.6" fill="#3d4657"/>
<circle cx="38.5" cy="613.8" r="6.6" fill="none" stroke="#fff" stroke-width="1.2"/>
<text x="38.5" y="617.3" font-size="9.5" fill="#fff" font-weight="bold" text-anchor="middle">?</text>
<rect x="76" y="149.5" width="1143" height="174.0" fill="#000" rx="6" fill-opacity="0.005"/><rect x="77" y="150.5" width="1141" height="172.0" fill="#000" rx="5" fill-opacity="0.007"/><rect x="78" y="151.5" width="1139" height="170.0" fill="#000" rx="4" fill-opacity="0.009"/><rect x="79" y="152.5" width="1137" height="168.0" fill="#000" rx="3" fill-opacity="0.011"/><rect x="80" y="153.5" width="1135" height="166.0" fill="#000" rx="2" fill-opacity="0.013"/><rect x="81" y="154.5" width="1133" height="164.0" fill="#000" rx="1" fill-opacity="0.016"/><rect x="82" y="155" width="1131" height="161.5" fill="#fff"/>
<text x="98.9" y="185.2" font-size="14" fill="#404040" textLength="45.3" lengthAdjust="spacingAndGlyphs" stroke="#404040" stroke-width="0.25">Análisis</text>
<rect x="97.9" y="194.5" width="222" height="29" fill="#fff" rx="3" stroke="#cfcfcf" stroke-width="1"/>
<text x="102.9" y="212.8" font-size="12" fill="#959595" textLength="30.6" lengthAdjust="spacingAndGlyphs">Todos</text>
<text x="98.9" y="257.1" font-size="14" fill="#404040" textLength="43" lengthAdjust="spacingAndGlyphs" stroke="#404040" stroke-width="0.25">Cliente</text>
<rect x="97.9" y="266.5" width="222" height="29.5" fill="#fff" rx="3" stroke="#cfcfcf" stroke-width="1"/>
<text x="102.9" y="284.5" font-size="12" fill="#959595" textLength="30.6" lengthAdjust="spacingAndGlyphs">Todos</text>
<text x="347.9" y="185.2" font-size="14" fill="#404040" textLength="47.2" lengthAdjust="spacingAndGlyphs" stroke="#404040" stroke-width="0.25">Período</text>
<rect x="346.9" y="194.5" width="222" height="29" fill="#fff" rx="3" stroke="#cfcfcf" stroke-width="1"/>
<text x="351.9" y="212.8" font-size="12" fill="#959595" textLength="97" lengthAdjust="spacingAndGlyphs">Últimos tres meses</text>
<text x="347.9" y="257.1" font-size="14" fill="#404040" textLength="33.7" lengthAdjust="spacingAndGlyphs" stroke="#404040" stroke-width="0.25">Pauta</text>
<rect x="346.9" y="266.5" width="222" height="29.5" fill="#fff" rx="3" stroke="#cfcfcf" stroke-width="1"/>
<text x="351.9" y="284.5" font-size="12" fill="#959595" textLength="30.2" lengthAdjust="spacingAndGlyphs">Todas</text>
<text x="597.8" y="185.2" font-size="14" fill="#404040" textLength="41.4" lengthAdjust="spacingAndGlyphs" stroke="#404040" stroke-width="0.25">Estado</text>
<rect x="596.8" y="194.5" width="222" height="29" fill="#fff" rx="3" stroke="#cfcfcf" stroke-width="1"/>
<text x="601.8" y="212.8" font-size="12" fill="#959595" textLength="30.6" lengthAdjust="spacingAndGlyphs">Todos</text>
<text x="597.8" y="257.1" font-size="14" fill="#404040" textLength="30" lengthAdjust="spacingAndGlyphs" stroke="#404040" stroke-width="0.25">Zona</text>
<rect x="596.8" y="266.5" width="222" height="29.5" fill="#fff" rx="3" stroke="#cfcfcf" stroke-width="1"/>
<text x="601.8" y="284.5" font-size="12" fill="#959595" textLength="30.2" lengthAdjust="spacingAndGlyphs">Todas</text>
<rect x="845.8" y="194.4" width="89" height="29" fill="#fff" rx="3" stroke="#aaaaaa" stroke-width="1"/>
<text x="867.1" y="214" font-size="14.5" fill="#333" textLength="47.4" lengthAdjust="spacingAndGlyphs" stroke="#333" stroke-width="0.2">Limpiar</text>
<rect x="944.2" y="193.9" width="90" height="29.8" fill="#8ab87d" rx="2.5"/>
<text x="970.6" y="214" font-size="14.5" fill="#f4f9f2" textLength="37.7" lengthAdjust="spacingAndGlyphs" stroke="#f4f9f2" stroke-width="0.2">Filtrar</text>
<rect x="1044.2" y="194.4" width="47" height="29" fill="#fff" rx="3" stroke="#aaaaaa" stroke-width="1"/>
<path d="M1052 204.4 H1068.3 M1052 209.1 H1068.3 M1052 213.7 H1068.3" fill="none" stroke="#6a6a6a" stroke-width="1.5"/>
<g fill="#fff" stroke="#555" stroke-width="1.1"><circle cx="1064.6" cy="204.4" r="1.9"/><circle cx="1055.3" cy="209.1" r="1.9"/><circle cx="1060" cy="213.7" r="1.9"/></g>
<path d="M1074.7 211.2 L1079.7 207 L1084 211.5" fill="none" stroke="#333" stroke-width="1.3"/>
<path d="M1188.5 200 V216 M1182.5 210 L1188.5 216 L1194.5 210 M1179 219.5 H1198" fill="none" stroke="#444" stroke-width="1.3"/>
<rect x="82.3" y="326" width="104.8" height="47" fill="#ffffff"/>
<rect x="191.8" y="326" width="122.7" height="46" fill="#f0f0f0"/>
<rect x="319.7" y="326" width="149.3" height="46" fill="#f0f0f0"/>
<text x="103.1" y="355.2" font-size="17.5" fill="#5a82bd" textLength="63" lengthAdjust="spacingAndGlyphs" stroke="#5a82bd" stroke-width="0.55">Resumen</text>
<text x="208" y="355.2" font-size="17.5" fill="#666" textLength="92" lengthAdjust="spacingAndGlyphs" stroke="#666" stroke-width="0.45">Proyecciones</text>
<text x="354.8" y="355.2" font-size="17.5" fill="#666" textLength="79.8" lengthAdjust="spacingAndGlyphs" stroke="#666" stroke-width="0.45">Abandonos</text>
<rect x="76" y="367.5" width="1143" height="331.5" fill="#000" rx="6" fill-opacity="0.005"/><rect x="77" y="368.5" width="1141" height="329.5" fill="#000" rx="5" fill-opacity="0.007"/><rect x="78" y="369.5" width="1139" height="327.5" fill="#000" rx="4" fill-opacity="0.009"/><rect x="79" y="370.5" width="1137" height="325.5" fill="#000" rx="3" fill-opacity="0.011"/><rect x="80" y="371.5" width="1135" height="323.5" fill="#000" rx="2" fill-opacity="0.013"/><rect x="81" y="372.5" width="1133" height="321.5" fill="#000" rx="1" fill-opacity="0.016"/><rect x="82" y="373" width="1131" height="319" fill="#fff"/>
<rect x="82.3" y="371.5" width="104.8" height="2" fill="#5a82bd"/>
<rect x="91" y="382" width="1113" height="39.3" fill="#f0f0f0"/>
<g fill="none" stroke="#222" stroke-width="1.3"><circle cx="112.3" cy="401.8" r="8.3"/><ellipse cx="112.3" cy="401.8" rx="3.8" ry="8.3"/><line x1="112.3" y1="393.5" x2="112.3" y2="410.1"/><line x1="104" y1="401.8" x2="120.6" y2="401.8"/><path d="M105.2 397.3 H119.4 M105.2 406.3 H119.4"/></g>
<text x="126" y="407.5" font-size="16" fill="#2b2b2b" textLength="148.7" lengthAdjust="spacingAndGlyphs" stroke="#2b2b2b" stroke-width="0.75">Predicción NPS Global</text>
<text x="104" y="445.2" font-size="15.5" fill="#666" textLength="69.8" lengthAdjust="spacingAndGlyphs">Resultados</text>
<text x="371" y="445.2" font-size="15.5" fill="#666" textLength="55.8" lengthAdjust="spacingAndGlyphs">Factores</text>
<rect x="91" y="456.5" width="1113" height="1.6" fill="#d4d4d4"/>
<rect x="356.2" y="421.3" width="1.6" height="253" fill="#cfcfcf"/>
<rect x="85" y="470.0" width="269.6" height="197.5" fill="#000" rx="6" fill-opacity="0.005"/><rect x="86" y="471.0" width="267.6" height="195.5" fill="#000" rx="5" fill-opacity="0.007"/><rect x="87" y="472.0" width="265.6" height="193.5" fill="#000" rx="4" fill-opacity="0.009"/><rect x="88" y="473.0" width="263.6" height="191.5" fill="#000" rx="3" fill-opacity="0.011"/><rect x="89" y="474.0" width="261.6" height="189.5" fill="#000" rx="2" fill-opacity="0.013"/><rect x="90" y="475.0" width="259.6" height="187.5" fill="#000" rx="1" fill-opacity="0.016"/><rect x="91" y="475.5" width="257.6" height="185" fill="#fff"/>
<text x="104" y="506.3" font-size="22.5" fill="#91c789" textLength="41" lengthAdjust="spacingAndGlyphs" stroke="#91c789" stroke-width="0.8">NPS</text>
<path d="M261.3 514.3 L278.40000000000003 484.8 L295.5 514.3 Z" fill="#91c789"/>
<text x="300.7" y="506.3" font-size="22" fill="#91c789" textLength="25.5" lengthAdjust="spacingAndGlyphs" stroke="#91c789" stroke-width="0.7">+5</text>
<text x="339.6" y="530.6" font-size="14.5" fill="#666" text-anchor="end" textLength="52.5" lengthAdjust="spacingAndGlyphs" stroke="#666" stroke-width="0.5">Mensual</text>
<text x="195.1" y="582.2" font-size="47" fill="#2e2e2e" font-weight="bold" textLength="48.599999999999994" lengthAdjust="spacingAndGlyphs">57</text>
<path d="M133.6 645.8 L175.8 623.7 L218 620.7 L262 601" fill="none" stroke="#91c789" stroke-width="6" stroke-linecap="round" stroke-linejoin="round"/>
<path d="M268.4 597.4 L257.6 611.0 L251.0 596.8 Z" fill="#91c789"/>
<line x1="217.5" y1="596.3" x2="217.5" y2="645.8" stroke="#222" stroke-width="2.3" stroke-dasharray="4.5 4.5"/>
<rect x="359.6" y="470.0" width="280.1" height="197.5" fill="#000" rx="6" fill-opacity="0.005"/><rect x="360.6" y="471.0" width="278.1" height="195.5" fill="#000" rx="5" fill-opacity="0.007"/><rect x="361.6" y="472.0" width="276.1" height="193.5" fill="#000" rx="4" fill-opacity="0.009"/><rect x="362.6" y="473.0" width="274.1" height="191.5" fill="#000" rx="3" fill-opacity="0.011"/><rect x="363.6" y="474.0" width="272.1" height="189.5" fill="#000" rx="2" fill-opacity="0.013"/><rect x="364.6" y="475.0" width="270.1" height="187.5" fill="#000" rx="1" fill-opacity="0.016"/><rect x="365.6" y="475.5" width="268.1" height="185" fill="#fff"/>
<text x="383.8" y="506.5" font-size="22.5" fill="#333" textLength="79.19999999999999" lengthAdjust="spacingAndGlyphs" stroke="#333" stroke-width="0.8">Rapidez</text>
<path d="M546.3 514.3 L563.4 484.8 L580.5 514.3 Z" fill="#91c789"/>
<text x="586" y="506.3" font-size="22" fill="#91c789" textLength="38.200000000000045" lengthAdjust="spacingAndGlyphs" stroke="#91c789" stroke-width="0.7">+15</text>
<text x="624.7" y="530.6" font-size="14.5" fill="#666" text-anchor="end" textLength="52.5" lengthAdjust="spacingAndGlyphs" stroke="#666" stroke-width="0.5">Mensual</text>
<text x="475" y="582.2" font-size="47" fill="#2e2e2e" font-weight="bold" textLength="48.89999999999998" lengthAdjust="spacingAndGlyphs">77</text>
<path d="M423.5 646.6 L468.4 638.3 L552 603.5" fill="none" stroke="#91c789" stroke-width="6" stroke-linecap="round" stroke-linejoin="round"/>
<path d="M558.4 600.6 L547.1 613.8 L541.1 599.4 Z" fill="#91c789"/>
<line x1="509.2" y1="591" x2="509.2" y2="640.7" stroke="#222" stroke-width="2.3" stroke-dasharray="4.5 4.5"/>
<rect x="646.3" y="470.0" width="278.4" height="197.5" fill="#000" rx="6" fill-opacity="0.005"/><rect x="647.3" y="471.0" width="276.4" height="195.5" fill="#000" rx="5" fill-opacity="0.007"/><rect x="648.3" y="472.0" width="274.4" height="193.5" fill="#000" rx="4" fill-opacity="0.009"/><rect x="649.3" y="473.0" width="272.4" height="191.5" fill="#000" rx="3" fill-opacity="0.011"/><rect x="650.3" y="474.0" width="270.4" height="189.5" fill="#000" rx="2" fill-opacity="0.013"/><rect x="651.3" y="475.0" width="268.4" height="187.5" fill="#000" rx="1" fill-opacity="0.016"/><rect x="652.3" y="475.5" width="266.4" height="185" fill="#fff"/>
<text x="664.8" y="506.5" font-size="22.5" fill="#333" textLength="96.80000000000007" lengthAdjust="spacingAndGlyphs" stroke="#333" stroke-width="0.8">Confianza</text>
<path d="M832.5 514.3 L849.6 484.8 L866.7 514.3 Z" fill="#91c789"/>
<text x="871.5" y="506.3" font-size="22" fill="#91c789" textLength="25.5" lengthAdjust="spacingAndGlyphs" stroke="#91c789" stroke-width="0.7">+2</text>
<text x="909.6999999999999" y="530.6" font-size="14.5" fill="#666" text-anchor="end" textLength="52.5" lengthAdjust="spacingAndGlyphs" stroke="#666" stroke-width="0.5">Mensual</text>
<text x="761.6" y="582.2" font-size="47" fill="#2e2e2e" font-weight="bold" textLength="48.39999999999998" lengthAdjust="spacingAndGlyphs">57</text>
<path d="M696.2 646.6 L734.5 639.5 L783.4 634.8 L826 622.5" fill="none" stroke="#91c789" stroke-width="6" stroke-linecap="round" stroke-linejoin="round"/>
<path d="M833.2 620.2 L820.6 632.0 L816.2 617.1 Z" fill="#91c789"/>
<line x1="783.4" y1="599.3" x2="783.4" y2="649" stroke="#222" stroke-width="2.3" stroke-dasharray="4.5 4.5"/>
<rect x="930.3" y="470.0" width="279.4" height="197.5" fill="#000" rx="6" fill-opacity="0.005"/><rect x="931.3" y="471.0" width="277.4" height="195.5" fill="#000" rx="5" fill-opacity="0.007"/><rect x="932.3" y="472.0" width="275.4" height="193.5" fill="#000" rx="4" fill-opacity="0.009"/><rect x="933.3" y="473.0" width="273.4" height="191.5" fill="#000" rx="3" fill-opacity="0.011"/><rect x="934.3" y="474.0" width="271.4" height="189.5" fill="#000" rx="2" fill-opacity="0.013"/><rect x="935.3" y="475.0" width="269.4" height="187.5" fill="#000" rx="1" fill-opacity="0.016"/><rect x="936.3" y="475.5" width="267.4" height="185" fill="#fff"/>
<text x="949.8" y="506.5" font-size="22.5" fill="#333" textLength="101.10000000000014" lengthAdjust="spacingAndGlyphs" stroke="#333" stroke-width="0.8">Seguridad</text>
<path d="M1116.8 514.3 L1133.8999999999999 484.8 L1151.0 514.3 Z" fill="#91c789"/>
<text x="1156.5" y="506.3" font-size="22" fill="#91c789" textLength="38.200000000000045" lengthAdjust="spacingAndGlyphs" stroke="#91c789" stroke-width="0.7">+10</text>
<text x="1194.6999999999998" y="530.6" font-size="14.5" fill="#666" text-anchor="end" textLength="52.5" lengthAdjust="spacingAndGlyphs" stroke="#666" stroke-width="0.5">Mensual</text>
<text x="1045.5" y="582.2" font-size="47" fill="#2e2e2e" font-weight="bold" textLength="48.40000000000009" lengthAdjust="spacingAndGlyphs">27</text>
<path d="M1004.1 646.6 L1045.5 625.3 L1083.2 629.6 L1126 609.8" fill="none" stroke="#91c789" stroke-width="6" stroke-linecap="round" stroke-linejoin="round"/>
<path d="M1132.4 607.0 L1121.5 620.5 L1115.0 606.4 Z" fill="#91c789"/>
<line x1="1083.2" y1="598.9" x2="1083.2" y2="647.8" stroke="#222" stroke-width="2.3" stroke-dasharray="4.5 4.5"/>
<rect x="76" y="687.5" width="1143" height="268.0" fill="#000" rx="6" fill-opacity="0.005"/><rect x="77" y="688.5" width="1141" height="266.0" fill="#000" rx="5" fill-opacity="0.007"/><rect x="78" y="689.5" width="1139" height="264.0" fill="#000" rx="4" fill-opacity="0.009"/><rect x="79" y="690.5" width="1137" height="262.0" fill="#000" rx="3" fill-opacity="0.011"/><rect x="80" y="691.5" width="1135" height="260.0" fill="#000" rx="2" fill-opacity="0.013"/><rect x="81" y="692.5" width="1133" height="258.0" fill="#000" rx="1" fill-opacity="0.016"/><rect x="82" y="693" width="1131" height="255.5" fill="#fff"/>
<rect x="91" y="701.2" width="1113" height="40.4" fill="#f0f0f0"/>
<text x="104.1" y="726" font-size="15.5" fill="#2e2e2e" textLength="74.8" lengthAdjust="spacingAndGlyphs" stroke="#2e2e2e" stroke-width="0.6">Abandonos</text>
<rect x="97.2" y="749.0" width="259.1" height="189.5" fill="#000" rx="6" fill-opacity="0.005"/><rect x="98.2" y="750.0" width="257.1" height="187.5" fill="#000" rx="5" fill-opacity="0.007"/><rect x="99.2" y="751.0" width="255.1" height="185.5" fill="#000" rx="4" fill-opacity="0.009"/><rect x="100.2" y="752.0" width="253.1" height="183.5" fill="#000" rx="3" fill-opacity="0.011"/><rect x="101.2" y="753.0" width="251.1" height="181.5" fill="#000" rx="2" fill-opacity="0.013"/><rect x="102.2" y="754.0" width="249.1" height="179.5" fill="#000" rx="1" fill-opacity="0.016"/><rect x="103.2" y="754.5" width="247.1" height="177" fill="#fff"/>
<text x="133.5" y="806.5" font-size="20.5" fill="#777" textLength="180.7" lengthAdjust="spacingAndGlyphs" stroke="#777" stroke-width="0.5">Posibles abandonos</text>
<text x="204.6" y="867.3" font-size="33" fill="#2e2e2e" font-weight="bold" textLength="45.3" lengthAdjust="spacingAndGlyphs">5%</text>
<text x="187.6" y="888" font-size="15.5" fill="#333" textLength="79.3" lengthAdjust="spacingAndGlyphs" stroke="#333" stroke-width="0.2">324 Clientes</text>
<rect x="359.7" y="748.7" width="349.7" height="190.0" fill="#000" rx="6" fill-opacity="0.005"/><rect x="360.7" y="749.7" width="347.7" height="188.0" fill="#000" rx="5" fill-opacity="0.007"/><rect x="361.7" y="750.7" width="345.7" height="186.0" fill="#000" rx="4" fill-opacity="0.009"/><rect x="362.7" y="751.7" width="343.7" height="184.0" fill="#000" rx="3" fill-opacity="0.011"/><rect x="363.7" y="752.7" width="341.7" height="182.0" fill="#000" rx="2" fill-opacity="0.013"/><rect x="364.7" y="753.7" width="339.7" height="180.0" fill="#000" rx="1" fill-opacity="0.016"/><rect x="365.7" y="754.2" width="337.7" height="177.5" fill="#fff"/>
<text x="474" y="774" font-size="12.5" fill="#333" textLength="124" lengthAdjust="spacingAndGlyphs" stroke="#333" stroke-width="0.35">Abandonos en el tiempo</text>
<rect x="410" y="798.7" width="262" height="0.8" fill="#e6e6e6"/>
<rect x="410" y="814.7" width="262" height="0.8" fill="#e6e6e6"/>
<rect x="410" y="829.2" width="262" height="0.8" fill="#e6e6e6"/>
<rect x="410" y="844.3000000000001" width="262" height="0.8" fill="#e6e6e6"/>
<rect x="410" y="858.0" width="262" height="0.8" fill="#e6e6e6"/>
<rect x="410" y="874.8000000000001" width="262" height="0.8" fill="#e6e6e6"/>
<text x="402.5" y="790.0" font-size="4.5" fill="#999" text-anchor="middle">30</text>
<text x="402.5" y="812.0" font-size="4.5" fill="#999" text-anchor="middle">30</text>
<text x="402.5" y="831.5" font-size="4.5" fill="#999" text-anchor="middle">25</text>
<text x="402.5" y="852.5" font-size="4.5" fill="#999" text-anchor="middle">15</text>
<text x="402.5" y="871.0" font-size="4.5" fill="#999" text-anchor="middle">5</text>
<text x="385.5" y="836" font-size="7" fill="#888" text-anchor="middle" transform="rotate(-90 385.5 836)" dy="2">Porcentajes</text>
<path d="M412.2 830.5 L478.3 859.6 L545.8 835.3 L607.9 831.9 L665.8 847.6" fill="none" stroke="#c4604a" stroke-width="2.3" stroke-linejoin="round"/>
<circle cx="412.2" cy="830.5" r="2.6" fill="#c4604a"/>
<circle cx="478.3" cy="859.6" r="2.6" fill="#c4604a"/>
<circle cx="545.8" cy="835.3" r="2.6" fill="#c4604a"/>
<circle cx="607.9" cy="831.9" r="2.6" fill="#c4604a"/>
<circle cx="665.8" cy="847.6" r="2.6" fill="#c4604a"/>
<text x="412.2" y="887.5" font-size="4.5" fill="#999" text-anchor="middle">Enero</text>
<text x="412.2" y="893.8" font-size="4.5" fill="#999" text-anchor="middle">2022</text>
<text x="478.3" y="887.5" font-size="4.5" fill="#999" text-anchor="middle">Febrero</text>
<text x="478.3" y="893.8" font-size="4.5" fill="#999" text-anchor="middle">2022</text>
<text x="545.8" y="887.5" font-size="4.5" fill="#999" text-anchor="middle">Marzo</text>
<text x="545.8" y="893.8" font-size="4.5" fill="#999" text-anchor="middle">2022</text>
<text x="607.9" y="887.5" font-size="4.5" fill="#999" text-anchor="middle">Abril</text>
<text x="607.9" y="893.8" font-size="4.5" fill="#999" text-anchor="middle">2022</text>
<text x="665.8" y="887.5" font-size="4.5" fill="#999" text-anchor="middle">Mayo</text>
<text x="665.8" y="893.8" font-size="4.5" fill="#999" text-anchor="middle">2022</text>
<text x="556" y="914" font-size="7.5" fill="#777" text-anchor="middle">Meses</text>
<rect x="710" y="748.5" width="499.5" height="189.5" fill="#000" rx="6" fill-opacity="0.005"/><rect x="711" y="749.5" width="497.5" height="187.5" fill="#000" rx="5" fill-opacity="0.007"/><rect x="712" y="750.5" width="495.5" height="185.5" fill="#000" rx="4" fill-opacity="0.009"/><rect x="713" y="751.5" width="493.5" height="183.5" fill="#000" rx="3" fill-opacity="0.011"/><rect x="714" y="752.5" width="491.5" height="181.5" fill="#000" rx="2" fill-opacity="0.013"/><rect x="715" y="753.5" width="489.5" height="179.5" fill="#000" rx="1" fill-opacity="0.016"/><rect x="716" y="754" width="487.5" height="177" fill="#fff"/>
<rect x="716" y="754" width="487.5" height="28" fill="#f0f0f0" rx="2"/>
<text x="728.7" y="772.5" font-size="11.5" fill="#333" textLength="81.1" lengthAdjust="spacingAndGlyphs" stroke="#333" stroke-width="0.45">Últimos Clientes</text>
<text x="1032" y="772.5" font-size="11.5" fill="#333" textLength="136" lengthAdjust="spacingAndGlyphs" stroke="#333" stroke-width="0.45">Probabilidad de abandonar</text>
<text x="728.7" y="802.6" font-size="11.5" fill="#444" textLength="92.5" lengthAdjust="spacingAndGlyphs">Camilo Maldonado</text>
<rect x="1085.4" y="786.2" width="32.7" height="27.7" fill="#bf6350" rx="3.5"/>
<text x="1101.7" y="803.7" font-size="8.5" fill="#fff" text-anchor="middle">0,95</text>
<text x="728.7" y="839.2" font-size="11.5" fill="#444" textLength="88.5" lengthAdjust="spacingAndGlyphs">Gonzalo González</text>
<rect x="1085.4" y="819.3" width="32.7" height="27.7" fill="#8bbaaa" rx="3.5"/>
<text x="1101.7" y="836.8" font-size="8.5" fill="#fff" text-anchor="middle">0,1</text>
<text x="728.7" y="876.7" font-size="11.5" fill="#444" textLength="78.3" lengthAdjust="spacingAndGlyphs">Juan Pablo Cruz</text>
<rect x="1085.4" y="859.6" width="32.7" height="27.7" fill="#8bbaaa" rx="3.5"/>
<text x="1101.7" y="877.1" font-size="8.5" fill="#fff" text-anchor="middle">0,24</text>
<text x="728.7" y="916.1" font-size="11.5" fill="#444" textLength="73.8" lengthAdjust="spacingAndGlyphs">Mariano García</text>
<rect x="1085.4" y="898.2" width="32.7" height="27.7" fill="#bf6350" rx="3.5"/>
<text x="1101.7" y="915.7" font-size="8.5" fill="#fff" text-anchor="middle">0,82</text>
<rect x="716" y="815.9" width="487.5" height="1.2" fill="#e4e4e4"/>
<rect x="716" y="855.1" width="487.5" height="1.2" fill="#e4e4e4"/>
<rect x="716" y="892.8" width="487.5" height="1.2" fill="#e4e4e4"/>
<rect x="80" y="949.5" width="1134" height="12.5" fill="#fdfdfd"/>
<rect x="80" y="961.5" width="1134" height="1" fill="#e6e6e6"/>
<rect x="2" y="0" width="1221.5" height="1.2" fill="#70747c"/>
<rect x="2" y="0" width="2.3" height="976.5" fill="#8a8a8a"/>
<rect x="1221.2" y="0" width="2.3" height="976.5" fill="#808080"/>
<rect x="2" y="974.2" width="1221.5" height="2.3" fill="#7c7c7c" rx="1"/>
</g>
</svg>
<div id="fade"></div>
</body></html>
